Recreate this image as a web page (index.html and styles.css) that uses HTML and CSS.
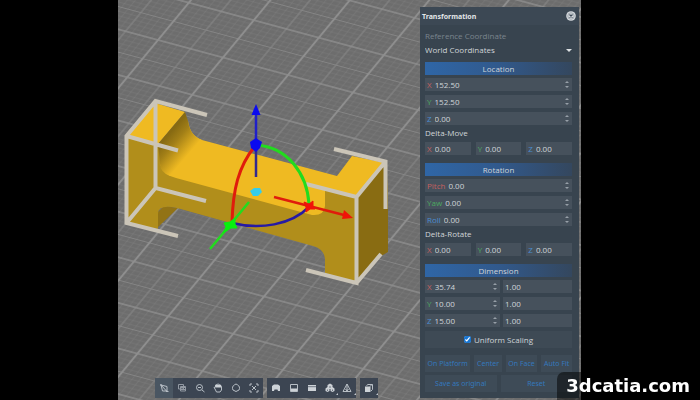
FILE: index.html
```html
<!DOCTYPE html>
<html lang="en">
<head>
<meta charset="utf-8">
<title>Transformation</title>
<link rel="stylesheet" href="styles.css">
</head>
<body>
<main class="stage">
  <svg class="scene" viewBox="118 0 463 400" preserveAspectRatio="xMidYMid slice" role="img" aria-label="3D view">
    <defs>
      <pattern id="grid" width="10" height="10" patternUnits="userSpaceOnUse" patternTransform="matrix(6.5 1.75 -3.08 3.73 158 40)">
        <g stroke="#858585" stroke-width=".14" stroke-opacity=".4">
          <path d="M1 0V10M2 0V10M3 0V10M4 0V10M6 0V10M7 0V10M8 0V10M9 0V10M0 1H10M0 2H10M0 3H10M0 4H10M0 6H10M0 7H10M0 8H10M0 9H10"/>
        </g>
        <path d="M5 0V10M0 5H10" stroke="#858585" stroke-width=".18"/>
        <path d="M0 0V10M10 0V10M0 0H10M0 10H10" stroke="#8e8e8e" stroke-width=".32"/>
      </pattern>
      <linearGradient id="fillet" gradientUnits="userSpaceOnUse" x1="171" y1="132" x2="192" y2="150">
        <stop offset="0" stop-color="#876a12"/><stop offset=".35" stop-color="#a27f17"/><stop offset="1" stop-color="#efba22"/>
      </linearGradient>
    </defs>
    <rect x="-400" width="1500" height="400" fill="#6d6d6d"/>
    <rect x="-400" width="1500" height="400" fill="url(#grid)"/>
    <path d="M157 228L178 208L164 206L156 214Z" fill="#927316"/>
    <path d="M127 137L158 144L164 172L325 190L356 197V283L325 273V259Q324 249 313 246L177 208Q158 204 158 214V229L127 223Z" fill="#b18e1b"/>
    <path d="M356 197L386 162L388 190V252L381 256L356 284Z" fill="#896c12"/>
    <path d="M155 103L185 112L158 144L127 136Z" fill="#efba22"/>
    <path d="M188 121Q190 136 202 140L337 176L352 156L386 163L356 196L325 190V206Q324 216 312 215L176 178Q163 175 160 164V146Z" fill="#efba22"/>
    <path d="M185 112L188 121Q190 136 202 140L170 176Q160 172 160 164L158 144Z" fill="url(#fillet)"/>
    <g fill="none" stroke="#cbc5b8" stroke-width="4">
      <path d="M207 115L155.500 101L126.500 136V223L178 236M126.500 136L178 150.500M155.500 101V188L206 201M155.500 188L126.500 223"/>
      <path d="M334 149L385.500 161.500V209M385.500 161.500L356.500 197L306 184M356.500 197V283L306 270M356.500 283L381 254"/>
    </g>
    <g fill="none" stroke-width="2.500">
      <path d="M256 146V177" stroke="#33298f"/>
      <path d="M256 112V146" stroke="#2020c8"/>
      <path d="M256 145C288 147 307 174 309 204" stroke="#22dc1e" stroke-width="3"/>
      <path d="M255 146C238 167 233 190 232 222" stroke="#e01c0c" stroke-width="3"/>
      <path d="M232 223C260 230 291 225 309 207" stroke="#261aa4"/>
      <path d="M274 197L344 215" stroke="#e01c0c"/>
      <path d="M249 202L210 249" stroke="#22dc1e"/>
    </g>
    <path d="M256 104L260.500 115H251.500Z" fill="#0a0af0"/>
    <path d="M353 218L342 219L344 210Z" fill="#f01408"/>
    <path d="M250 142L256 138L262 142L260 148L256 152L251 148Z" fill="#0a0af0"/>
    <path d="M304 202L309 204L313 201L313 206L315 209L310 209L306 212L306 207Z" fill="#f01408" stroke="#f01408"/>
    <path d="M224 223L230 222L235 218L235 224L237 228L231 228L223 233L226 227Z" fill="#08f00e" stroke="#08f00e"/>
    <path d="M250 191L254 188H260L262 192L258 196H253Z" fill="#36cdea"/>
  </svg>

  <div class="toolbar" role="toolbar" aria-label="View tools">
    <div class="tools">
      <button class="tool active" aria-label="Select"><svg viewBox="0 0 12 12"><path d="M3 3L9 4.500V9H4.500Z"/><path d="M2.500 2.500L8.500 9M2 3h2M8 9.500h2.500"/></svg></button>
      <button class="tool dim" aria-label="Multiple select"><svg viewBox="0 0 12 12"><path d="M2.500 2.500H7.500V7H2.500ZM4.500 4.500H9.500V9H4.500Z"/><path d="M5 5.500H9.500M5 7.500H9.500"/></svg></button>
      <button class="tool" aria-label="Zoom"><svg viewBox="0 0 12 12"><circle cx="5.500" cy="5.500" r="3"/><path d="M8 8L10.500 10M4 5.500H7"/></svg></button>
      <button class="tool" aria-label="Pan"><svg viewBox="0 0 12 12"><path d="M3 7L2 5.500L3.500 5V3L5 2.500L6 2L7.500 2.500L9 3.500L9.500 5V8L8 10H4.500Z"/><path class="solid" d="M3.500 3H9V5.500H3.500Z"/></svg></button>
      <button class="tool" aria-label="Rotate"><svg viewBox="0 0 12 12"><path d="M3 8A3.700 3.700 0 0 1 4.500 2.800M7.500 2.800A3.700 3.700 0 0 1 9 8M4.500 2.800L6 2L7.500 2.800M3 8L6 9.500L9 8"/></svg></button>
      <button class="tool" aria-label="Fit view"><svg viewBox="0 0 12 12"><path d="M2 4V2H4M8 2H10V4M10 8V10H8M4 10H2V8M4 4L8 8M8 4L4 8"/></svg></button>
    </div>
    <div class="tools">
      <button class="tool" aria-label="Perspective"><svg viewBox="0 0 12 12"><path class="solid" d="M2 4L4 2.500H8L10 4V9H8L7.500 7.500H4.500L4 9H2Z"/></svg></button>
      <button class="tool" aria-label="Save"><svg viewBox="0 0 12 12"><path d="M2.500 2.500H9.500V9.500H2.500Z"/><path class="solid" d="M3 6.500H9V9H3Z"/></svg></button>
      <button class="tool" aria-label="Platform"><svg viewBox="0 0 12 12"><path class="solid" d="M2 3H10V9H2Z"/><path class="cut" d="M2 4.700H10"/></svg></button>
      <button class="tool narrow" aria-label="Objects"><svg viewBox="0 0 12 12"><path class="solid" d="M6 1.500L8.500 3V5L10.500 6.500V9L8.500 10L6.500 9V7H5.500V9L3.500 10L1.500 9V6.500L3.500 5V3Z"/><path class="cut" d="M6 4V6M3.500 7.500V9M8.500 7.500V9"/></svg><span class="more"></span></button>
      <button class="tool" aria-label="Supports"><svg viewBox="0 0 12 12"><path d="M6 2L10 9.500H2ZM6 2V9.500M4.500 7L6 9L7.500 7"/></svg><span class="more"></span></button>
    </div>
    <div class="tools">
      <button class="tool" aria-label="View cube"><svg viewBox="0 0 12 12"><path class="solid" d="M2 4.500H7.500V10H2Z"/><path d="M3.500 3.500L5 2.500H9.500V7.500L8 9M7 4.500L9 2.500"/></svg><span class="more"></span></button>
    </div>
  </div>

  <form class="panel">
    <header class="panel-head">
      <h1>Transformation</h1>
      <button type="button" class="close" aria-label="Close"><svg viewBox="0 0 10 10"><circle cx="5" cy="5" r="4.800" fill="#d6dade"/><path d="M3.500 3.500L6.500 6.500M6.500 3.500L3.500 6.500" stroke="#3b4855" stroke-width="1.200"/><circle cx="5" cy="5" r="3.200" fill="none" stroke="#7a858f" stroke-width=".6"/></svg></button>
    </header>
    <div class="panel-body">
      <label class="caption muted" for="coord">Reference Coordinate</label>
      <div class="select-wrap"><select id="coord"><option>World Coordinates</option></select></div>

      <section class="group">
        <h2>Location</h2>
        <div class="field"><label class="x" for="lx">X</label><input id="lx" value="152.50"><span class="spin"></span></div>
        <div class="field"><label class="y" for="ly">Y</label><input id="ly" value="152.50"><span class="spin"></span></div>
        <div class="field"><label class="z" for="lz">Z</label><input id="lz" value="0.00"><span class="spin"></span></div>
        <h3>Delta-Move</h3>
        <div class="triple">
          <div class="field"><label class="x" for="mx">X</label><input id="mx" value="0.00"></div>
          <div class="field"><label class="y" for="my">Y</label><input id="my" value="0.00"></div>
          <div class="field"><label class="z" for="mz">Z</label><input id="mz" value="0.00"></div>
        </div>
      </section>

      <section class="group">
        <h2>Rotation</h2>
        <div class="field"><label class="x" for="rp">Pitch</label><input id="rp" value="0.00"><span class="spin"></span></div>
        <div class="field"><label class="y" for="ry">Yaw</label><input id="ry" value="0.00"><span class="spin"></span></div>
        <div class="field"><label class="z" for="rr">Roll</label><input id="rr" value="0.00"><span class="spin"></span></div>
        <h3>Delta-Rotate</h3>
        <div class="triple">
          <div class="field"><label class="x" for="dx">X</label><input id="dx" value="0.00"></div>
          <div class="field"><label class="y" for="dy">Y</label><input id="dy" value="0.00"></div>
          <div class="field"><label class="z" for="dz">Z</label><input id="dz" value="0.00"></div>
        </div>
      </section>

      <section class="group">
        <h2>Dimension</h2>
        <div class="pair">
          <div class="field"><label class="x" for="sx">X</label><input id="sx" value="35.74"><span class="spin"></span></div>
          <div class="field"><input aria-label="X scale" value="1.00"></div>
          <div class="field"><label class="y" for="sy">Y</label><input id="sy" value="10.00"><span class="spin"></span></div>
          <div class="field"><input aria-label="Y scale" value="1.00"></div>
          <div class="field"><label class="z" for="sz">Z</label><input id="sz" value="15.00"><span class="spin"></span></div>
          <div class="field"><input aria-label="Z scale" value="1.00"></div>
        </div>
        <label class="uniform"><input type="checkbox" checked>Uniform Scaling</label>
      </section>

      <div class="actions">
        <button type="button">On Platform</button><button type="button">Center</button><button type="button">On Face</button><button type="button">Auto Fit</button>
      </div>
      <div class="actions even">
        <button type="button">Save as original</button><button type="button">Reset</button>
      </div>
    </div>
  </form>
</main>
<div class="watermark">3dcatia.com</div>
</body>
</html>
```
FILE: styles.css
```css
* { box-sizing: border-box; }

body {
  margin: 0;
  min-height: 100vh;
  display: grid;
  grid-template-columns: 118fr 463fr 119fr;
  background: #000;
  color: #d0d5d9;
  font: 8px/13px "Open Sans", "Noto Sans", sans-serif;
}

button, input, select {
  margin: 0;
  padding: 0;
  border: 0;
  background: none;
  color: inherit;
  font: inherit;
}

h1, h2, h3 { margin: 0; font: inherit; }

.stage {
  position: relative;
  grid-column: 2;
  display: flex;
  justify-content: space-between;
  align-items: flex-end;
  overflow: hidden;
  padding: 7px 2px 2px 37px;
}

.scene {
  position: absolute;
  inset: 0;
  width: 100%;
  height: 100%;
}

/* View toolbar */
.toolbar {
  position: relative;
  display: flex;
  gap: 4px;
}

.tools {
  display: flex;
  height: 20px;
  background: #3c4552;
}

.tool {
  position: relative;
  display: grid;
  place-items: center;
  width: 18px;
  height: 20px;
}

.tool.narrow { width: 17px; }
.tool.active { background: #4a5662; }
.tool.dim { opacity: .7; }

.tool svg {
  width: 12px;
  height: 12px;
  fill: none;
  stroke: #b8bfc6;
  stroke-width: 1;
}

.tool .solid { fill: #cdd2d7; stroke: none; }
.tool .cut { stroke: #56606c; stroke-width: .8; }

.more {
  position: absolute;
  right: 0;
  bottom: 3px;
  border: 1px solid #c3c9cf;
  border-top-color: transparent;
  border-left-color: transparent;
}

/* Transformation panel */
.panel {
  position: relative;
  width: 35%;
  min-width: 159px;
  max-width: 240px;
  background: #38444f;
}

.panel-head {
  display: flex;
  justify-content: space-between;
  align-items: center;
  height: 18px;
  padding: 0 3px 0 2px;
  background: #3c4854;
}

h1 {
  color: #e2e5e8;
  font: bold 7px/13px "Noto Sans", sans-serif;
}

.close { width: 10px; height: 10px; }
.close svg { display: block; }

.panel-body { padding: 4px 7px 6px 5px; }

.caption { display: block; height: 13px; }
.muted { color: #7b858e; }

.select-wrap {
  position: relative;
  height: 14px;
  margin-bottom: 6px;
}

select {
  display: block;
  width: 100%;
  height: 14px;
  appearance: none;
}

.select-wrap::after {
  content: "";
  position: absolute;
  right: 0;
  top: 7px;
  border: 3px solid transparent;
  border-top-color: #dde1e4;
  border-bottom: 0;
}

.group { margin-bottom: 8px; }

h2 {
  height: 13px;
  margin-bottom: 3px;
  background: linear-gradient(90deg, #2f66a6, #31598c 50%, #34475e);
  text-align: center;
}

h3 { height: 17px; line-height: 16px; }

.field {
  display: flex;
  align-items: center;
  gap: 3px;
  height: 13px;
  padding: 0 2px;
  background: #46515c;
}

.field + .field { margin-top: 4px; }
.pair .field, .triple .field { margin-top: 0; }

.field input {
  flex: 1;
  min-width: 0;
  width: 0;
  height: 13px;
}

.x { color: #c5605f; }
.y { color: #4caa60; }
.z { color: #4a8dd0; }

.triple {
  display: grid;
  grid-template-columns: repeat(3, 1fr);
  gap: 5px;
}

.pair {
  display: grid;
  grid-template-columns: 75fr 69fr;
  gap: 4px 3px;
  margin-bottom: 4px;
}

.spin {
  display: flex;
  flex-direction: column;
  gap: 3px;
  width: 6px;
  align-items: center;
}

.spin::before, .spin::after {
  content: "";
  border: 2px solid transparent;
}

.spin::before { border-bottom-color: #97a0a8; border-top: 0; }
.spin::after { border-top-color: #97a0a8; border-bottom: 0; }

.uniform {
  display: flex;
  justify-content: center;
  align-items: center;
  gap: 3px;
  height: 17px;
  background: #3e4a55;
}

.uniform input {
  width: 7px;
  height: 7px;
  accent-color: #1976d2;
}

.group:last-of-type { margin-bottom: 7px; }

.actions {
  display: flex;
  gap: 4px;
  font-size: 7px;
}

.actions + .actions { margin-top: 3px; }

.actions button {
  flex: 1 1 auto;
  height: 17px;
  background: #3e4b57;
  color: #3478bd;
  font-family: "Noto Sans", sans-serif;
  white-space: nowrap;
}

.actions.even button { flex: 1 1 0; }

.watermark {
  position: fixed;
  right: 0;
  bottom: 0;
  padding: 0 10px 0 9px;
  border-radius: 7px 0 0 0;
  background: rgba(0, 0, 0, .5);
  color: #fff;
  font: bold 18px/28px "DejaVu Sans", sans-serif;
}
```
